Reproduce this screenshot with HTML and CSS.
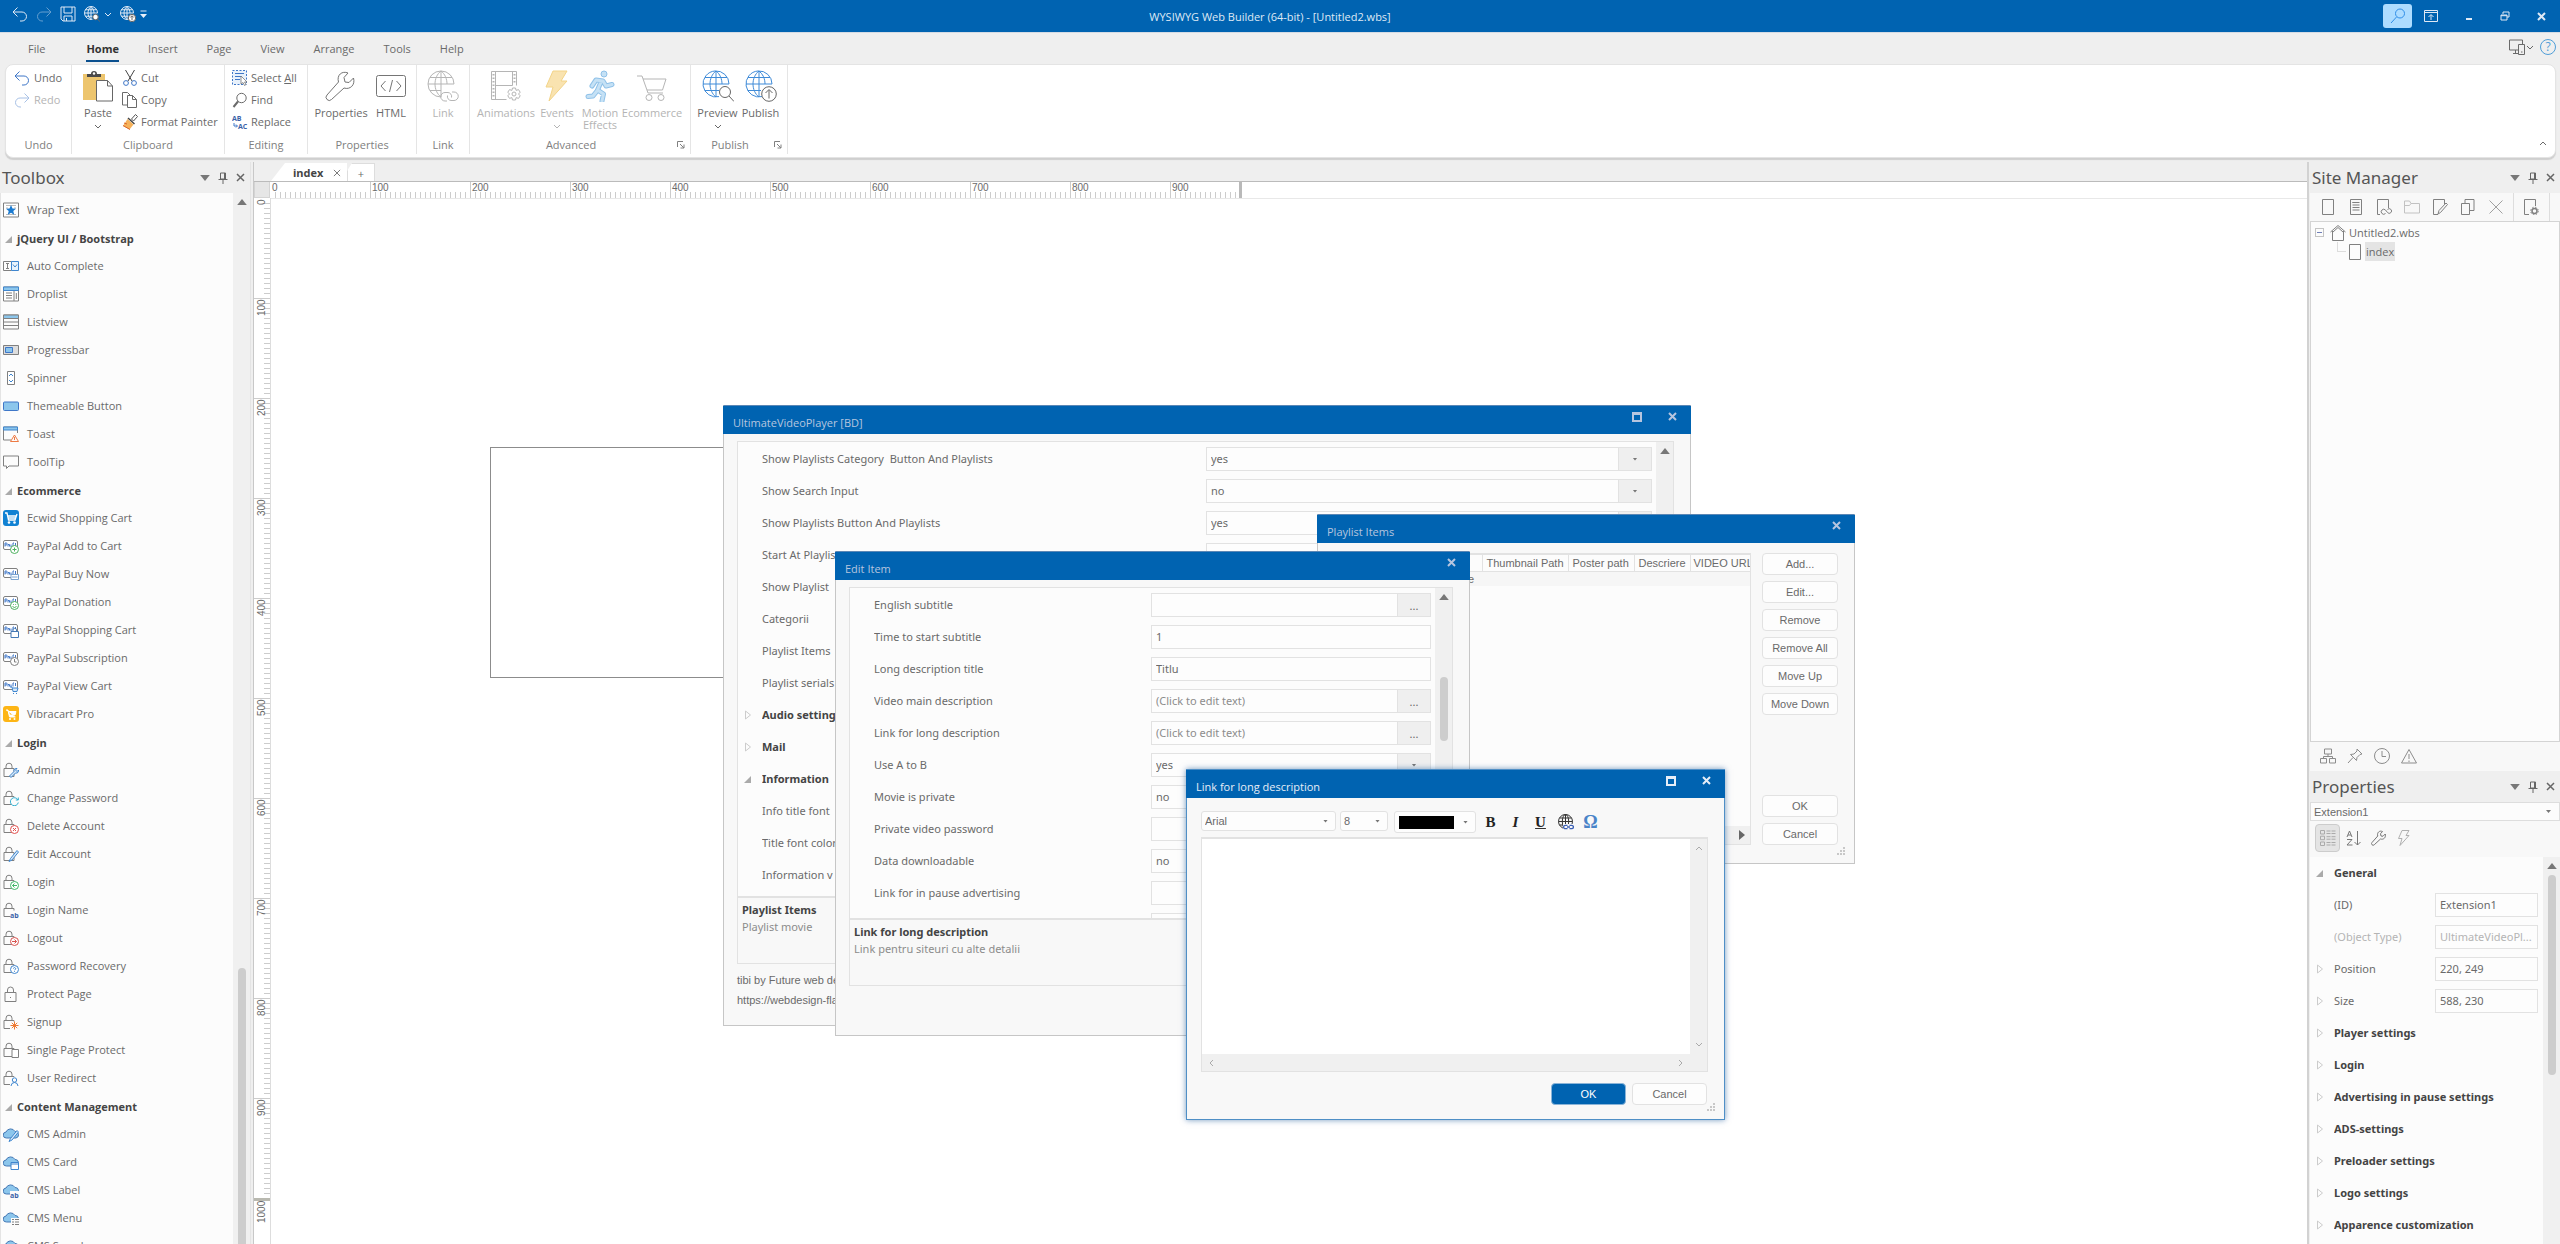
FILE: index.html
```html
<!DOCTYPE html>
<html lang="en">
<head>
<meta charset="utf-8">
<title>WYSIWYG Web Builder (64-bit) - [Untitled2.wbs]</title>
<link rel="stylesheet" href="styles.css">
</head>
<body>
<svg class="sprite" aria-hidden="true">
  <symbol id="undo" viewBox="0 0 16 16"><path d="M5.500 1.500L1 6l4.500 4.500M1 6h9a4.500 4.500 0 0 1 0 9H8" /></symbol>
  <symbol id="redo" viewBox="0 0 16 16"><path d="M10.500 1.500L15 6l-4.500 4.500M15 6H6a4.500 4.500 0 0 0 0 9h1" /></symbol>
  <symbol id="save" viewBox="0 0 16 16"><path d="M1 1h14v14H3l-2-2zM4 1v6h8V1M4 15v-5h8v5M6.500 12v3" /></symbol>
  <symbol id="globe-search" viewBox="0 0 32 32"><path d="M17 26.600A13 13 0 1 1 27 14M14 1v26M1 14h26M3 7.500h22M3 20.500h14M14 1c-8 6-8 20 0 26M14 1c4 3 6 8 6 13"/><g class="badge"><circle cx="23" cy="22" r="5.500"/><path d="M27 26l5 5.500"/></g></symbol>
  <symbol id="globe-up" viewBox="0 0 32 32"><path d="M17 26.600A13 13 0 1 1 27 14M14 1v26M1 14h26M3 7.500h22M3 20.500h13M14 1c-8 6-8 20 0 26M14 1c4 3 6 8 6 13"/><g class="badge"><circle cx="24" cy="24" r="7.300"/><path d="M24 28.500v-8.500M20.500 23l3.500-3.500 3.500 3.500"/></g></symbol>
  <symbol id="globe-link" viewBox="0 0 32 32"><path d="M14 27A13 13 0 1 1 27 14M14 1v26M1 14h26M3 7.500h22M3 20.500h11M14 1c-8 6-8 20 0 26M14 1c4 3 6 8 6 13"/><path d="M20 31h-2a4 4 0 0 1 0-8.500h3a4 4 0 0 1 3.500 5M25 22h2a4 4 0 0 1 0 8.500h-3a4 4 0 0 1-3.500-5"/></symbol>
  <symbol id="chev" viewBox="0 0 8 5"><path d="M1 1l3 3 3-3"/></symbol>
  <symbol id="tri-down" viewBox="0 0 8 5"><path d="M0 0h8L4 5z"/></symbol>
  <symbol id="tri-up" viewBox="0 0 8 5"><path d="M0 5h8L4 0z"/></symbol>
  <symbol id="tri-closed" viewBox="0 0 8 10"><path d="M1.500 1v8l5-4z"/></symbol>
  <symbol id="tri-open" viewBox="0 0 8 8"><path d="M8 0v8H0z"/></symbol>
  <symbol id="pin" viewBox="0 0 10 12"><path d="M2.500 1h5v6h-5zM6.500 1v6M.500 7.500h9M5 7.500V12"/></symbol>
  <symbol id="close" viewBox="0 0 9 9"><path d="M1 1l7 7M8 1L1 8"/></symbol>
  <symbol id="maximize" viewBox="0 0 10 10"><path d="M1 1h8v8H1zM1 2h8"/></symbol>
  <symbol id="launch" viewBox="0 0 8 8"><path d="M.500 6V.500H6M3 3l4 4M7 3.500V7H3.500"/></symbol>
  <symbol id="clipboard" viewBox="0 0 32 32"><path d="M1 4h22v9h-8v17H1z" fill="#edc56e"/><path d="M5 7h14V4h-4a3 3 0 0 0-6 0H5z" fill="#4a4a4a"/><circle cx="12" cy="3.500" r="1.200" fill="#fff"/><path d="M14.500 10.500h11l5 5.500v15h-16zM25.500 10.500V16h5" fill="#fff" stroke="#666"/></symbol>
  <symbol id="cut" viewBox="0 0 16 16"><path d="M3.500 0l6.500 11M12.500 0L6 11" stroke="#444"/><circle cx="4" cy="13" r="2.400" stroke="#3f77c8"/><circle cx="12" cy="13" r="2.400" stroke="#3f77c8"/></symbol>
  <symbol id="copy" viewBox="0 0 16 16"><path d="M5.500 3.500h5l4 4v8h-9zM10.500 3.500v4h4M5 13H.500V.500h5L8 3"/></symbol>
  <symbol id="painter" viewBox="0 0 16 16"><path d="M13.500.500l2 2-4 4.500-2-2z" fill="#fff" stroke="#555"/><path d="M6 4l6.500 6" stroke="#444" stroke-width="1.500"/><path d="M5.500 5l6 5.500-4 5L1 12z" fill="#f6b25a"/><path d="M1 11.500l7 4M2 9l3 1" stroke="#d9662a"/></symbol>
  <symbol id="select-all" viewBox="0 0 16 16"><path d="M.500.500h14v14H.500z" stroke="#3f77c8" stroke-dasharray="2 1.500" fill="#e8f1fb"/><path d="M3 3.500h9M3 6.500h6M3 9.500h5" stroke="#3f77c8"/><path d="M9 6v8l2-1.500 1.500 3 1.500-1-1.500-2.500H15z" fill="#fff" stroke="#777" stroke-width=".8"/></symbol>
  <symbol id="find" viewBox="0 0 16 16"><circle cx="9.500" cy="6" r="4.700"/><path d="M6 9.500L1.500 15" stroke-width="2"/></symbol>
  <symbol id="wrench" viewBox="0 0 32 32"><path d="M28.500 8l-4.500 4.500-4-.5-1-4.500L23 3C17 .5 11.500 5 13.500 12L2 25a3 3 0 0 0 4.500 4.500L19 18c6 2 11.500-3 9.500-10z"/></symbol>
  <symbol id="html" viewBox="0 0 32 32"><rect x="1.500" y="5.500" width="29" height="21" rx="2"/><path d="M10.500 11L6 16l4.500 5M21.500 11l4.500 5-4.500 5M17.500 10l-3 12"/></symbol>
  <symbol id="film" viewBox="0 0 32 32"><path d="M16.500 29.500h-15v-28h25v14M5.500 1.500v28M22.500 1.500v14M5.500 15.500h17"/><path d="M3.500 4v24M24.500 4v10" stroke-dasharray="1.500 2" stroke-width="2"/><path d="M22.500 18h3l.6 2.400 2.400-.8 1.700 2.600-1.700 1.800 1.700 1.800-1.700 2.600-2.400-.8-.6 2.400h-3l-.6-2.400-2.400.8-1.700-2.600 1.700-1.800-1.700-1.800 1.700-2.600 2.400.8z"/><circle cx="24" cy="24" r="2"/></symbol>
  <symbol id="bolt" viewBox="0 0 32 32"><path d="M12 1h14l-6 10h6L8 31l4-14H5z"/></symbol>
  <symbol id="run" viewBox="0 0 32 32"><circle cx="20" cy="4" r="3" fill="#c5e1f5" stroke="#8fc1e8"/><path d="M8 16l4-6 7 1 3 5 6-1.500M17 12l-3.500 8 6 4-1.500 7M13 21l-4 5-5 .5" stroke="#8fc1e8" stroke-width="5" stroke-linejoin="round" stroke-linecap="round"/><path d="M8 16l4-6 7 1 3 5 6-1.500M17 12l-3.500 8 6 4-1.500 7M13 21l-4 5-5 .5" stroke="#c5e1f5" stroke-width="3" stroke-linejoin="round" stroke-linecap="round"/></symbol>
  <symbol id="cart" viewBox="0 0 32 32"><path d="M1 6h5l6 17h15M7 9h23l-3.500 11H11"/><circle cx="13" cy="27.500" r="3"/><circle cx="25" cy="27.500" r="3"/></symbol>
  <symbol id="page" viewBox="0 0 16 16"><path d="M2.500.500h11v15h-11z"/></symbol>
  <symbol id="lock" viewBox="0 0 16 16"><path d="M1 6.500h10v8H1zM3 6.500V4.200a3 3 0 0 1 6 0v2.300"/></symbol>
  <symbol id="paypal" viewBox="0 0 16 16"><rect x=".5" y="2.500" width="14" height="9" rx="1.500" fill="#fff"/><path d="M2 8.500V5h1.200a1 1 0 0 1 0 2H2M5 8.500V6.500h1.500v2M8 6.500v2.500M10 8.500V5h1M12.500 5v3" stroke="#3f77c8" stroke-width="1"/></symbol>
  <symbol id="cloud" viewBox="0 0 16 16"><path d="M3.500 12a3 3 0 0 1-.5-6 5 5 0 0 1 9-.500A3.300 3.300 0 0 1 13 12z" fill="#8cc6ec" stroke="#4579b5"/></symbol>
  <symbol id="pencil" viewBox="0 0 16 16"><path d="M7.500 12.500l-1.500 3 3-1.500 6.500-8-1.500-1.500z" fill="#d7e9f9" stroke="#3f86cf"/></symbol>
</svg>

<header class="titlebar">
  <div class="quick">
    <button aria-label="Undo"><svg class="i16"><use href="#undo"/></svg></button>
    <button aria-label="Redo" class="dim"><svg class="i16"><use href="#redo"/></svg></button>
    <button aria-label="Save"><svg class="i16"><use href="#save"/></svg></button>
    <button aria-label="Preview"><svg class="i16 thick"><use href="#globe-search"/></svg></button>
    <button aria-label="Preview options" class="tiny"><svg class="chev"><use href="#chev"/></svg></button>
    <button aria-label="Publish"><svg class="i16 thick"><use href="#globe-up"/></svg></button>
    <button aria-label="Customize" class="tiny"><svg width="7" height="8" viewBox="0 0 7 8"><path d="M.5 1h6"/><path d="M0 4h7L3.500 8z" fill="#e8f0fa" stroke="none"/></svg></button>
  </div>
  <h1 class="app-title">WYSIWYG Web Builder (64-bit) - [Untitled2.wbs]</h1>
  <div class="system">
    <button class="search" aria-label="Search"><svg class="i16" viewBox="0 0 16 16"><circle cx="10" cy="5.500" r="4.500"/><path d="M6.500 9L1 15"/></svg></button>
    <button aria-label="Ribbon options"><svg width="14" height="12" viewBox="0 0 14 12"><path d="M.5.500h13v11H.500zM.500 2.500h13M7 10V5M4.500 7L7 4.500 9.500 7"/></svg></button>
    <button aria-label="Minimize"><svg width="8" height="12" viewBox="0 0 8 12"><path d="M1 9h6" stroke-width="2"/></svg></button>
    <button aria-label="Restore"><svg width="10" height="10" viewBox="0 0 10 10"><path d="M3 3V1h6v5H7M1 4h6v5H1zM1 4.700h6"/></svg></button>
    <button aria-label="Close"><svg width="9" height="9" class="bold"><use href="#close"/></svg></button>
  </div>
</header>

<nav class="tabs">
  <a href="#" class="tab file">File</a><a href="#" class="tab active">Home</a><a href="#" class="tab">Insert</a><a href="#" class="tab">Page</a><a href="#" class="tab">View</a><a href="#" class="tab">Arrange</a><a href="#" class="tab">Tools</a><a href="#" class="tab">Help</a>
  <div class="tabs-right">
    <button aria-label="Devices"><svg class="i16" viewBox="0 0 16 16"><path d="M9 11H.500V1h13v4M4 14.500h5M6.500 11v3.500M9.500 5.500h6v10h-6zM12 13h1.500"/></svg><svg class="chev"><use href="#chev"/></svg></button>
    <button class="help" aria-label="Help"><span>?</span></button>
  </div>
</nav>

<section class="ribbon">
  <div class="group g-undo">
    <div class="group-body col">
      <button class="small"><svg class="i16 blue"><use href="#undo"/></svg>Undo</button>
      <button class="small disabled"><svg class="i16 blue"><use href="#redo"/></svg>Redo</button>
    </div>
    <div class="group-label">Undo</div>
  </div>
  <div class="group g-clip">
    <div class="group-body">
      <button class="large"><svg class="i32 raw"><use href="#clipboard"/></svg>Paste<svg class="chev"><use href="#chev"/></svg></button>
      <div class="col">
        <button class="small"><svg class="i16 raw"><use href="#cut"/></svg>Cut</button>
        <button class="small"><svg class="i16"><use href="#copy"/></svg>Copy</button>
        <button class="small"><svg class="i16 raw"><use href="#painter"/></svg>Format Painter</button>
      </div>
    </div>
    <div class="group-label">Clipboard</div>
  </div>
  <div class="group g-edit">
    <div class="group-body col">
      <button class="small"><svg class="i16 raw"><use href="#select-all"/></svg><span>Select <u>A</u>ll</span></button>
      <button class="small"><svg class="i16"><use href="#find"/></svg>Find</button>
      <button class="small"><svg class="i16 raw" viewBox="0 0 16 16"><text x="0" y="7" class="ic-text">AB</text><text x="6" y="15" class="ic-text">AC</text><path d="M2 9v3h3M4 10.500L5.500 12 4 13.500" stroke="#3f77c8"/></svg>Replace</button>
    </div>
    <div class="group-label">Editing</div>
  </div>
  <div class="group g-prop">
    <div class="group-body">
      <button class="large w50"><svg class="i32"><use href="#wrench"/></svg>Properties</button>
      <button class="large w50"><svg class="i32"><use href="#html"/></svg>HTML</button>
    </div>
    <div class="group-label">Properties</div>
  </div>
  <div class="group g-link">
    <div class="group-body"><button class="large disabled"><svg class="i32"><use href="#globe-link"/></svg>Link</button></div>
    <div class="group-label">Link</div>
  </div>
  <div class="group g-adv">
    <div class="group-body">
      <button class="large disabled w60"><svg class="i32"><use href="#film"/></svg>Animations</button>
      <button class="large disabled w40"><svg class="i32 bolt"><use href="#bolt"/></svg>Events<svg class="chev"><use href="#chev"/></svg></button>
      <button class="large disabled w46"><svg class="i32 raw"><use href="#run"/></svg><span>Motion<br>Effects</span></button>
      <button class="large disabled w60"><svg class="i32"><use href="#cart"/></svg>Ecommerce</button>
    </div>
    <div class="group-label">Advanced<button class="launch" aria-label="Advanced options"><svg width="8" height="8"><use href="#launch"/></svg></button></div>
  </div>
  <div class="group g-pub">
    <div class="group-body">
      <button class="large w43"><svg class="i32 globe"><use href="#globe-search"/></svg>Preview<svg class="chev"><use href="#chev"/></svg></button>
      <button class="large w43"><svg class="i32 globe"><use href="#globe-up"/></svg>Publish</button>
    </div>
    <div class="group-label">Publish<button class="launch" aria-label="Publish options"><svg width="8" height="8"><use href="#launch"/></svg></button></div>
  </div>
  <button class="collapse" aria-label="Collapse ribbon"><svg width="8" height="5" viewBox="0 0 8 5"><path d="M1 4l3-3 3 3"/></svg></button>
</section>

<main class="workspace">
  <aside class="toolbox">
    <header class="pane-head"><h2>Toolbox</h2><button aria-label="Menu"><svg class="tri"><use href="#tri-down"/></svg></button><button aria-label="Pin"><svg width="10" height="12"><use href="#pin"/></svg></button><button aria-label="Close"><svg width="9" height="9"><use href="#close"/></svg></button></header>
    <div class="pane-scroll">
      <div class="tool-list">
        <button class="tool"><svg viewBox="0 0 16 16"><path d="M.5 1h15v14H.500z" fill="#fff"/><path d="M3 3.500h10M3 6h2M11 6h2M3 12.500h10" stroke="#bbb"/><path d="M8 3l1.500 3.500 3.500.3-2.700 2.300.9 3.600L8 10.800l-3.200 1.900.9-3.600L3 6.800l3.500-.3z" fill="#1a7ad0" stroke="none"/></svg>Wrap Text</button>
        <h3><svg class="open"><use href="#tri-open"/></svg>jQuery UI / Bootstrap</h3>
        <button class="tool"><svg viewBox="0 0 16 16"><path d="M.5 3.500h8v9h-8zM3 5.500h3M3 10.500h3M4.500 5.500v5"/><path d="M8.500 3.500h7v9h-7zM10 6.500L12 9l2-2.500" stroke="#3f86cf" fill="#e8f3fc"/></svg>Auto Complete</button>
        <button class="tool"><svg viewBox="0 0 16 16"><path d="M.5 1h15v14H.500z" fill="#fff"/><path d="M.5 1h15v3.500H.500z" fill="#8cc6ec" stroke="#3f86cf"/><path d="M3 7h6M3 9.500h6M3 12h6M11 5v10M13.300 7v6"/></svg>Droplist</button>
        <button class="tool"><svg viewBox="0 0 16 16"><path d="M.5 1h15v14H.500zM.500 8h15M.500 11.500h15"/><path d="M.5 1h15v3.500H.500z" fill="#8cc6ec"/></svg>Listview</button>
        <button class="tool"><svg viewBox="0 0 16 16"><path d="M.5 3.500h15v9H.500z" fill="#ddd"/><path d="M2.500 5.500h7v5h-7z" fill="#8cc6ec" stroke="#3f77c8"/></svg>Progressbar</button>
        <button class="tool"><svg viewBox="0 0 16 16"><path d="M4.500 1.500h7v13h-7z" fill="#fff"/><path d="M6 6l2-2 2 2M6 10l2 2 2-2" stroke="#3f86cf"/></svg>Spinner</button>
        <button class="tool"><svg viewBox="0 0 16 16"><rect x=".5" y="4" width="15" height="8.500" rx="1" fill="#8cc6ec" stroke="#3f77c8"/></svg>Themeable Button</button>
        <button class="tool"><svg viewBox="0 0 16 16"><path d="M8 14H.500V1h14v6"/><path d="M.5 1h14v3H.500z" fill="#8cc6ec" stroke="#3f86cf"/><path d="M11.500 9l4 6.500h-8zM11.500 11v3" stroke="#ee7a43"/></svg>Toast</button>
        <button class="tool"><svg viewBox="0 0 16 16"><path d="M.5 2h15v10H6l-2.500 2.500V12h-3z"/></svg>ToolTip</button>
        <h3><svg class="open"><use href="#tri-open"/></svg>Ecommerce</h3>
        <button class="tool"><svg viewBox="0 0 16 16"><rect width="16" height="16" rx="3" fill="#1182d3" stroke="none"/><path d="M2 3h2l1.500 7h6.500l2-6M5 6h8M5.500 8h7" stroke="#fff" stroke-width="1.300"/><circle cx="6" cy="12.500" r="1.300" fill="#fff" stroke="none"/><circle cx="11.500" cy="12.500" r="1.300" fill="#fff" stroke="none"/></svg>Ecwid Shopping Cart</button>
        <button class="tool"><svg viewBox="0 0 16 16"><use href="#paypal"/><circle cx="11.500" cy="11.500" r="4" fill="#fff" stroke="#4db05f"/><path d="M11.500 9.500v4M9.500 11.500h4" stroke="#4db05f"/></svg>PayPal Add to Cart</button>
        <button class="tool"><svg viewBox="0 0 16 16"><use href="#paypal"/><path d="M8 8.500h7.500v5H8zM9 11h5.500" stroke="#7aa3d0" fill="#fff"/></svg>PayPal Buy Now</button>
        <button class="tool"><svg viewBox="0 0 16 16"><use href="#paypal"/><circle cx="11.500" cy="11.500" r="4" fill="#fff" stroke="#4db05f"/><path d="M9.500 12.500q2 2 4 0M10 10.500h.8M12.300 10.500h.8" stroke="#4db05f"/></svg>PayPal Donation</button>
        <button class="tool"><svg viewBox="0 0 16 16"><use href="#paypal"/><path d="M8 9.500h7.500v6H8zM10 9.500V8a1.700 1.700 0 0 1 3.500 0v1.500" stroke="#4579b5" fill="#fff"/></svg>PayPal Shopping Cart</button>
        <button class="tool"><svg viewBox="0 0 16 16"><use href="#paypal"/><circle cx="11.500" cy="11.500" r="4" fill="#fff"/><path d="M11.500 9v3h2"/></svg>PayPal Subscription</button>
        <button class="tool"><svg viewBox="0 0 16 16"><use href="#paypal"/><path d="M7 9h2l1 4.500h4l1-3.500H9.500" stroke="#3f86cf" fill="#d7e9f9"/><path d="M10 15.500h1M13 15.500h1" stroke="#3f86cf"/></svg>PayPal View Cart</button>
        <button class="tool"><svg viewBox="0 0 16 16"><rect width="16" height="16" rx="3" fill="#fdb515" stroke="none"/><path d="M3 4h2l1.500 7h6M5.500 5.500H13l-1 3.500H6.500z" stroke="#fff" fill="#fff"/><circle cx="7" cy="13" r="1" fill="#fff" stroke="none"/><circle cx="11.500" cy="13" r="1" fill="#fff" stroke="none"/></svg>Vibracart Pro</button>
        <h3><svg class="open"><use href="#tri-open"/></svg>Login</h3>
        <button class="tool"><svg viewBox="0 0 16 16"><use href="#lock"/><path d="M15.500 8l-1.500 1.500-1.500-1.500L14 6.500c-2-.5-3.500 1-3 3L6.500 14l1.500 1.500 4.500-4.500c2 .5 3.500-1 3-3z" stroke="#3f86cf" fill="#d7e9f9"/></svg>Admin</button>
        <button class="tool"><svg viewBox="0 0 16 16"><use href="#lock"/><circle cx="11.500" cy="11.500" r="4.500" fill="#fcfcfc" stroke="none"/><path d="M15 10a4 4 0 1 0 .3 2.500M15.300 7.500V10h-2.500" stroke="#35b0d0"/></svg>Change Password</button>
        <button class="tool"><svg viewBox="0 0 16 16"><use href="#lock"/><circle cx="11.500" cy="11.500" r="4" fill="#fff" stroke="#e2504e"/><path d="M10 10l3 3M13 10l-3 3" stroke="#e2504e"/></svg>Delete Account</button>
        <button class="tool"><svg viewBox="0 0 16 16"><use href="#lock"/><use href="#pencil"/></svg>Edit Account</button>
        <button class="tool"><svg viewBox="0 0 16 16"><use href="#lock"/><circle cx="11.500" cy="11.500" r="4" fill="#fff" stroke="#43b86a"/><path d="M14 11.500H9.500M11.500 9.500l-2 2 2 2" stroke="#43b86a"/></svg>Login</button>
        <button class="tool"><svg viewBox="0 0 16 16"><use href="#lock"/><path d="M7 8.500h9V16H7z" fill="#fcfcfc" stroke="none"/><text x="7" y="15.500" class="ic-text">ab</text></svg>Login Name</button>
        <button class="tool"><svg viewBox="0 0 16 16"><use href="#lock"/><circle cx="11.500" cy="11.500" r="4" fill="#fff" stroke="#d9534f"/><path d="M9 11.500h4.500M11.500 9.500l2 2-2 2" stroke="#d9534f"/></svg>Logout</button>
        <button class="tool"><svg viewBox="0 0 16 16"><use href="#lock"/><circle cx="11.500" cy="11.500" r="4" fill="#fff" stroke="#3f86cf"/><path d="M10.200 10.500q1.300-2 2.600 0q0 1-1.300 1.500M11.500 13v.8" stroke="#3f86cf"/></svg>Password Recovery</button>
        <button class="tool"><svg viewBox="0 0 16 16"><path d="M2 6.500h11v9H2zM4.500 6.500V4a3 3 0 0 1 6 0v2.500M7.500 11v1"/></svg>Protect Page</button>
        <button class="tool"><svg viewBox="0 0 16 16"><use href="#lock"/><path d="M7 7.500h9V16H7z" fill="#fcfcfc" stroke="none"/><path d="M11.500 7.500v8M7.500 11.500h8M8.800 8.800l5.400 5.400M14.200 8.800l-5.400 5.400" stroke="#ee7a33"/></svg>Signup</button>
        <button class="tool"><svg viewBox="0 0 16 16"><use href="#lock"/><path d="M9 7.500h6.500v8H9z" fill="#fff"/></svg>Single Page Protect</button>
        <button class="tool"><svg viewBox="0 0 16 16"><use href="#lock"/><path d="M7 7h9v9H7z" fill="#fcfcfc" stroke="none"/><path d="M8 16q.3-3.500 3.500-3.500T15 16" stroke="#3f86cf"/><circle cx="11.500" cy="10" r="2.200" stroke="#3f86cf"/></svg>User Redirect</button>
        <h3><svg class="open"><use href="#tri-open"/></svg>Content Management</h3>
        <button class="tool"><svg viewBox="0 0 16 16"><use href="#cloud"/><use href="#pencil"/></svg>CMS Admin</button>
        <button class="tool"><svg viewBox="0 0 16 16"><use href="#cloud"/><path d="M8 8.500h7.500v7H8zM8 10h7.500" fill="#fff" stroke="#3f86cf"/></svg>CMS Card</button>
        <button class="tool"><svg viewBox="0 0 16 16"><use href="#cloud"/><path d="M7 9h9v7H7z" fill="#fcfcfc" stroke="none"/><text x="7" y="15.500" class="ic-text">ab</text></svg>CMS Label</button>
        <button class="tool"><svg viewBox="0 0 16 16"><use href="#cloud"/><path d="M8 8h8v8H8z" fill="#fcfcfc" stroke="none"/><path d="M9 9.500h2M12 9.500h4M9 12h2M12 12h4M9 14.500h2M12 14.500h4"/></svg>CMS Menu</button>
        <button class="tool"><svg viewBox="0 0 16 16"><use href="#cloud"/></svg>CMS Search</button>
      </div>
      <div class="sbar"><svg class="tri"><use href="#tri-up"/></svg><span class="thumb thumb-tool"></span></div>
    </div>
  </aside>

  <section class="document">
    <div class="doc-tabs">
      <button class="doc-tab"><b>index</b><svg width="8" height="8"><use href="#close"/></svg></button><button class="doc-add" aria-label="New page">+</button>
    </div>
    <div class="ruler-x"><span class="corner"></span><div class="scale-x"><i>0</i><i>100</i><i>200</i><i>300</i><i>400</i><i>500</i><i>600</i><i>700</i><i>800</i><i>900</i></div></div>
    <div class="doc-body">
      <div class="ruler-y"><div class="scale-y"><i>0</i><i>100</i><i>200</i><i>300</i><i>400</i><i>500</i><i>600</i><i>700</i><i>800</i><i>900</i></div><div class="scale-end"><i>1000</i></div></div>
      <div class="canvas"><div class="extension"></div></div>
    </div>
  </section>

  <aside class="right">
    <header class="pane-head"><h2>Site Manager</h2><button aria-label="Menu"><svg class="tri"><use href="#tri-down"/></svg></button><button aria-label="Pin"><svg width="10" height="12"><use href="#pin"/></svg></button><button aria-label="Close"><svg width="9" height="9"><use href="#close"/></svg></button></header>
    <div class="site-tools">
      <button aria-label="New page"><svg class="i16"><use href="#page"/></svg></button>
      <button aria-label="Page from template"><svg class="i16" viewBox="0 0 16 16"><path d="M2.500.500h11v15h-11zM4.500 3.500h3M4.500 6h7M4.500 8.500h7M4.500 11h7M4.500 3.500h7"/></svg></button>
      <button aria-label="New link"><svg class="i16" viewBox="0 0 16 16"><path d="M4 15.500H1.500V.500h11V9"/><path d="M9.500 14.500a2.500 2.500 0 1 1 0-3.500l2 2.500a2.300 2.300 0 1 0 0-3"/></svg></button>
      <button aria-label="New folder" class="faint"><svg class="i16" viewBox="0 0 16 16"><path d="M.5 14V2h5l1.500 2.500h8.500V14zM.500 6.500h5L7 4.500"/></svg></button>
      <button aria-label="Edit"><svg class="i16" viewBox="0 0 16 16"><path d="M6 15.500H1.500V.500h11V5M6 15l1-3.500 7-7.500 1.500 1.500-7 8z"/></svg></button>
      <button aria-label="Clone"><svg class="i16" viewBox="0 0 16 16"><path d="M1.500 4.500h8v11h-8zM5 4.500v-4h9v11H9.500"/></svg></button>
      <button aria-label="Delete" class="soft"><svg class="i16" viewBox="0 0 16 16"><path d="M1.500 1.500l13 13M14.500 1.500l-13 13"/></svg></button>
      <span class="vsep"></span>
      <button aria-label="Page properties"><svg class="i16" viewBox="0 0 16 16"><path d="M6 15.500H1.500V.500h11V7"/><circle cx="11.500" cy="12" r="2.500" stroke-width="1.500"/><circle cx="11.500" cy="12" r="3.800" stroke-dasharray="1.500 1.500"/></svg></button>
      <span class="vsep"></span>
    </div>
    <div class="tree">
      <div class="node"><span class="minus"></span><svg class="i16" viewBox="0 0 16 16"><path d="M.5 7L8 .500 15.500 7M2.500 6v9.500h11V6"/><path d="M3 7l5-4.500L13 7"/></svg>Untitled2.wbs</div>
      <div class="node child"><span class="branch"></span><svg class="i16"><use href="#page"/></svg><span class="picked">index</span></div>
    </div>
    <div class="site-foot">
      <button aria-label="Site map"><svg class="i16" viewBox="0 0 16 16"><path d="M4.500 1h7v5h-7zM.500 10.500h6v4.500h-6zM9.500 10.500h6v4.500h-6zM8 6v2.500M3.500 10.500v-2h9v2"/></svg></button>
      <button aria-label="Pinned"><svg class="i16" viewBox="0 0 16 16"><path d="M10 1l5 5-2 .5-3 3-.5 3L3.500 6.500 7 6l3-3zM6 9.500L1 15"/></svg></button>
      <button aria-label="Recent"><svg class="i16" viewBox="0 0 16 16"><circle cx="8" cy="8" r="7.500"/><path d="M8 3v5.500h4"/></svg></button>
      <button aria-label="Warnings"><svg class="i16" viewBox="0 0 16 16"><path d="M8 1.500L15.500 15H.500zM8 6v5M8 12.500V14"/></svg></button>
    </div>
    <header class="pane-head"><h2>Properties</h2><button aria-label="Menu"><svg class="tri"><use href="#tri-down"/></svg></button><button aria-label="Pin"><svg width="10" height="12"><use href="#pin"/></svg></button><button aria-label="Close"><svg width="9" height="9"><use href="#close"/></svg></button></header>
    <div class="object-pick"><select aria-label="Object"><option>Extension1</option></select><span class="drop"></span></div>
    <div class="prop-tools">
      <button class="on" aria-label="Categorized"><svg class="i16" viewBox="0 0 16 16"><path d="M.5.500h4v3.500h-4zM.500 6.200h4v3.500h-4zM.500 12h4v3.500h-4zM6.500 1h4M6.500 3.500h4M6.500 6.700h4M6.500 9.200h4M6.500 12.500h4M6.500 15h4M11.500 1h4M11.500 3.500h4M11.500 6.700h4M11.500 9.200h4M11.500 12.500h4M11.500 15h4"/></svg></button>
      <button aria-label="Alphabetical"><svg class="i16" viewBox="0 0 16 16"><path d="M1 7l2.500-6L6 7M2 5h3M1 9.500h5L1 15h5.500M11.500 1v14M8.500 12l3 3 3-3"/></svg></button>
      <button aria-label="Settings"><svg class="i16 thick"><use href="#wrench"/></svg></button>
      <button aria-label="Events" class="faint"><svg class="i16 thick"><use href="#bolt"/></svg></button>
    </div>
    <div class="pane-scroll props">
      <div class="prop-list">
        <div class="row"><svg class="open"><use href="#tri-open"/></svg><b>General</b></div>
        <div class="row"><label for="p-id">(ID)</label><div class="field"><input id="p-id" value="Extension1"></div></div>
        <div class="row muted"><label for="p-type">(Object Type)</label><div class="field"><input id="p-type" value="UltimateVideoPl..." disabled></div></div>
        <div class="row"><svg class="closed"><use href="#tri-closed"/></svg><label for="p-pos">Position</label><div class="field"><input id="p-pos" value="220, 249"></div></div>
        <div class="row"><svg class="closed"><use href="#tri-closed"/></svg><label for="p-size">Size</label><div class="field"><input id="p-size" value="588, 230"></div></div>
        <div class="row"><svg class="closed"><use href="#tri-closed"/></svg><b>Player settings</b></div>
        <div class="row"><svg class="closed"><use href="#tri-closed"/></svg><b>Login</b></div>
        <div class="row"><svg class="closed"><use href="#tri-closed"/></svg><b>Advertising in pause settings</b></div>
        <div class="row"><svg class="closed"><use href="#tri-closed"/></svg><b>ADS-settings</b></div>
        <div class="row"><svg class="closed"><use href="#tri-closed"/></svg><b>Preloader settings</b></div>
        <div class="row"><svg class="closed"><use href="#tri-closed"/></svg><b>Logo settings</b></div>
        <div class="row"><svg class="closed"><use href="#tri-closed"/></svg><b>Apparence customization</b></div>
      </div>
      <div class="sbar"><svg class="tri"><use href="#tri-up"/></svg><span class="thumb thumb-props"></span></div>
    </div>
  </aside>
</main>

<section class="dialog d-player" aria-label="UltimateVideoPlayer">
  <header class="d-title"><span>UltimateVideoPlayer [BD]</span><button aria-label="Maximize"><svg width="10" height="10"><use href="#maximize"/></svg></button><button aria-label="Close"><svg width="9" height="9"><use href="#close"/></svg></button></header>
  <div class="sheet">
    <div class="sheet-rows">
      <div class="prop-list">
        <div class="row"><label for="u1">Show Playlists Category&nbsp; Button And Playlists</label><div class="field"><select id="u1"><option>yes</option></select><span class="drop box"></span></div></div>
        <div class="row"><label for="u2">Show Search Input</label><div class="field"><select id="u2"><option>no</option></select><span class="drop box"></span></div></div>
        <div class="row"><label for="u3">Show Playlists Button And Playlists</label><div class="field"><select id="u3"><option>yes</option></select><span class="drop box"></span></div></div>
        <div class="row"><label for="u4">Start At Playlist</label><div class="field"><input id="u4"></div></div>
        <div class="row"><label for="u5">Show Playlist</label><div class="field"><input id="u5"></div></div>
        <div class="row"><label for="u6">Categorii</label><div class="field"><input id="u6"></div></div>
        <div class="row"><label for="u7">Playlist Items</label><div class="field"><input id="u7"></div></div>
        <div class="row"><label for="u8">Playlist serials</label><div class="field"><input id="u8"></div></div>
        <div class="row"><svg class="closed"><use href="#tri-closed"/></svg><b>Audio settings</b></div>
        <div class="row"><svg class="closed"><use href="#tri-closed"/></svg><b>Mail</b></div>
        <div class="row"><svg class="open"><use href="#tri-open"/></svg><b>Information</b></div>
        <div class="row"><label for="u9">Info title font</label><div class="field"><input id="u9"></div></div>
        <div class="row"><label for="u10">Title font color</label><div class="field"><input id="u10"></div></div>
        <div class="row"><label for="u11">Information v</label><div class="field"><input id="u11"></div></div>
      </div>
      <div class="sbar"><svg class="tri"><use href="#tri-up"/></svg></div>
    </div>
    <div class="sheet-note"><b>Playlist Items</b><p>Playlist movie</p></div>
  </div>
  <div class="credits"><p>tibi by Future web de</p><p>https://webdesign-fla</p></div>
</section>

<section class="dialog d-list" aria-label="Playlist Items">
  <header class="d-title"><span>Playlist Items</span><button aria-label="Close"><svg width="9" height="9"><use href="#close"/></svg></button></header>
  <div class="list-body">
    <div class="list-frame">
      <table>
        <thead><tr><th class="c-first"></th><th class="c-thumb">Thumbnail Path</th><th class="c-poster">Poster path</th><th class="c-desc">Descriere</th><th>VIDEO URL</th></tr></thead>
        <tbody><tr><td class="c-first">e</td><td></td><td></td><td></td><td></td></tr></tbody>
      </table>
      <div class="hbar"><svg width="6" height="10" viewBox="0 0 6 10"><path d="M0 0v10l6-5z"/></svg></div>
    </div>
    <div class="list-buttons">
      <button class="btn">Add...</button><button class="btn">Edit...</button><button class="btn">Remove</button><button class="btn">Remove All</button><button class="btn">Move Up</button><button class="btn">Move Down</button>
      <button class="btn push">OK</button><button class="btn">Cancel</button>
    </div>
  </div>
  <svg class="grip" viewBox="0 0 9 9"><path d="M6 0h2v2H6zM3 3h2v2H3zM6 3h2v2H6zM0 6h2v2H0zM3 6h2v2H3zM6 6h2v2H6z"/></svg>
</section>

<section class="dialog d-edit" aria-label="Edit Item">
  <header class="d-title"><span>Edit Item</span><button aria-label="Close"><svg width="9" height="9"><use href="#close"/></svg></button></header>
  <div class="sheet">
    <div class="sheet-rows">
      <div class="prop-list">
        <div class="row"><label for="e1">English subtitle</label><div class="field"><input id="e1"><button class="more">...</button></div></div>
        <div class="row"><label for="e2">Time to start subtitle</label><div class="field"><input id="e2" value="1"></div></div>
        <div class="row"><label for="e3">Long description title</label><div class="field"><input id="e3" value="Titlu"></div></div>
        <div class="row"><label for="e4">Video main description</label><div class="field"><input id="e4" class="hint" value="(Click to edit text)"><button class="more">...</button></div></div>
        <div class="row"><label for="e5">Link for long description</label><div class="field"><input id="e5" class="hint" value="(Click to edit text)"><button class="more">...</button></div></div>
        <div class="row"><label for="e6">Use A to B</label><div class="field"><select id="e6"><option>yes</option></select><span class="drop box"></span></div></div>
        <div class="row"><label for="e7">Movie is private</label><div class="field"><select id="e7"><option>no</option></select><span class="drop box"></span></div></div>
        <div class="row"><label for="e8">Private video password</label><div class="field"><input id="e8"></div></div>
        <div class="row"><label for="e9">Data downloadable</label><div class="field"><select id="e9"><option>no</option></select><span class="drop box"></span></div></div>
        <div class="row"><label for="e10">Link for in pause advertising</label><div class="field"><input id="e10"></div></div>
        <div class="row"><label for="e11"></label><div class="field"><input id="e11"></div></div>
      </div>
      <div class="sbar"><svg class="tri"><use href="#tri-up"/></svg><span class="thumb thumb-edit"></span></div>
    </div>
    <div class="sheet-note"><b>Link for long description</b><p>Link pentru siteuri cu alte detalii</p></div>
  </div>
</section>

<section class="dialog d-text" aria-label="Link for long description">
  <header class="d-title"><span>Link for long description</span><button aria-label="Maximize"><svg width="10" height="10"><use href="#maximize"/></svg></button><button aria-label="Close"><svg width="9" height="9"><use href="#close"/></svg></button></header>
  <div class="format">
    <div class="combo font"><select aria-label="Font"><option>Arial</option></select><span class="drop"></span></div>
    <div class="combo size"><select aria-label="Size"><option>8</option></select><span class="drop"></span></div>
    <button class="combo color" aria-label="Text color"><span class="swatch"></span><span class="drop"></span></button>
    <button class="fmt"><b>B</b></button><button class="fmt"><i><b>I</b></i></button><button class="fmt"><u><b>U</b></u></button>
    <button class="fmt" aria-label="Insert link"><svg class="i16" viewBox="0 0 16 16"><circle cx="7.500" cy="7.500" r="7"/><ellipse cx="7.500" cy="7.500" rx="3.200" ry="7"/><path d="M7.500.500v14M.500 7.500h14M1.500 4h12M1.500 11h12"/><path d="M5 10h11v6H5z" fill="#f8f8f8" stroke="none"/><path d="M9.500 14.700H7.300a1.600 1.600 0 0 1 0-3.400h2.200M11.500 11.300h2.200a1.600 1.600 0 0 1 0 3.400h-2.200M9 13h3" stroke="#3b5fb5" stroke-width="1.300"/></svg></button>
    <button class="fmt omega">Ω</button>
  </div>
  <div class="editor">
    <textarea aria-label="Text"></textarea>
    <div class="vbar"><svg width="8" height="5" viewBox="0 0 8 5"><path d="M1 4l3-3 3 3"/></svg><svg width="8" height="5"><use href="#chev"/></svg></div>
    <div class="hbar2"><svg width="5" height="8" viewBox="0 0 5 8"><path d="M4 1L1 4l3 3"/></svg><svg width="5" height="8" viewBox="0 0 5 8"><path d="M1 1l3 3-3 3"/></svg></div>
  </div>
  <div class="actions"><button class="btn primary">OK</button><button class="btn">Cancel</button></div>
  <svg class="grip" viewBox="0 0 9 9"><path d="M6 0h2v2H6zM3 3h2v2H3zM6 3h2v2H6zM0 6h2v2H0zM3 6h2v2H3zM6 6h2v2H6z"/></svg>
</section>
</body>
</html>
```
FILE: styles.css
```css
:root {
  --blue: #0063b1;
  --chrome: #efefef;
  --sheet: #fcfcfc;
  --line: #e2e2e2;
  --text: #6a6a6a;
  --dark: #444;
  --ui: "Open Sans", "Noto Sans", sans-serif;
  --wide: "Noto Sans", "Open Sans", sans-serif;
  --arial: "Liberation Sans", Arial, sans-serif;
}
* { box-sizing: border-box; }
body {
  margin: 0;
  height: 100vh;
  display: flex;
  flex-direction: column;
  overflow: hidden;
  position: relative;
  background: var(--chrome);
  color: var(--text);
  font: 11px/16px var(--ui);
}
button, input, select, textarea { font: inherit; color: inherit; margin: 0; padding: 0; border: 0; background: none; outline: 0; border-radius: 0; }
select { appearance: none; }
p, h1, h2, h3 { margin: 0; font-weight: 400; }
b { font-weight: 700; color: var(--dark); }
svg { fill: none; stroke: currentColor; flex: none; display: block; }
.sprite { position: absolute; width: 0; height: 0; }
.i16 { width: 16px; height: 16px; }
.i32 { width: 32px; height: 32px; stroke: #757575; }
.raw { stroke: none; }
.thick { stroke-width: 2px; }
.bold { stroke-width: 2px; }
.chev { width: 8px; height: 5px; stroke: #666; }
.tri { width: 10px; height: 6px; fill: #777; stroke: none; }
.open { width: 7px; height: 7px; fill: #aaa; stroke: none; }
.closed { width: 8px; height: 10px; stroke: #ccc; }
.ic-text { font: 700 7px var(--ui); fill: #3b62a8; stroke: none; }

/* Title bar */
.titlebar { height: 32px; flex: none; display: flex; align-items: center; background: var(--blue); color: #dfe9f5; }
.quick, .system { flex: 1; display: flex; align-items: center; }
.quick { gap: 8px; padding: 0 18px 4px 12px; }
.quick .chev { stroke: #dfe9f5; }
.dim { opacity: .45; }
.tiny { width: 8px; margin-left: -4px; }
.app-title { font-size: 11px; padding-top: 2px; margin-right: 36px; }
.system { justify-content: flex-end; padding-right: 14px; gap: 27px; }
.search { width: 29px; height: 24px; display: grid; place-items: center; background: #addcff; color: #2f8ee8; border-radius: 3px; margin-right: -15px; }

/* Ribbon tabs */
.tabs { height: 32px; flex: none; display: flex; align-items: center; gap: 29px; padding: 0 0 1px 28px; border-top: 1px solid #d4dbe4; }
.tab { color: var(--text); text-decoration: none; padding: 7px 0 3px; border-bottom: 2px solid transparent; }
.tab.file { margin-right: 12px; }
.tab.active { font-weight: 700; color: #333; border-color: #0a4f8e; }
.tabs-right { margin-left: auto; display: flex; align-items: center; gap: 6px; padding: 0 4px 2px 0; }
.tabs-right button { display: flex; align-items: center; gap: 1px; }
.help span { width: 16px; height: 16px; border: 1px solid #4f9ed8; border-radius: 50%; color: #4f9ed8; font-size: 12px; line-height: 14px; text-align: center; }

/* Ribbon */
.ribbon { flex: none; height: 94px; margin: 0 4px 0 5px; display: flex; background: #fff; border: 1px solid #e4e4e4; border-radius: 8px; box-shadow: 0 2px 1px #cfcfcf; padding-bottom: 3px; }
.group { display: flex; flex-direction: column; justify-content: space-between; border-right: 1px solid #e5e5e5; }
.group-body { display: flex; padding: 5px 0 0; }
.group-label { position: relative; text-align: center; color: #808080; line-height: 18px; }
.launch { position: absolute; right: 5px; top: 5px; }
.col { display: flex; flex-direction: column; gap: 6px; }
.small { display: flex; align-items: center; gap: 3px; height: 16px; white-space: nowrap; }
.blue { stroke: #3f77c8; }
.g-undo { width: 66px; } .g-undo .col { padding: 5px 0 0 8px; }
.g-undo .small { gap: 4px; }
.g-clip { width: 153px; } .g-clip .group-body { padding-left: 8px; gap: 6px; }
.g-edit { width: 83px; } .g-edit .col { padding: 5px 0 0 7px; }
.g-prop { width: 109px; } .g-prop .group-body { padding-left: 8px; }
.g-link { width: 53px; } .g-link .group-body { justify-content: center; }
.g-adv { width: 221px; } .g-adv .group-body { padding-left: 6px; }
.g-adv .group-label { padding-right: 18px; }
.g-pub { width: 97px; } .g-pub .group-body { padding-left: 5px; }
.g-pub .group-label { padding-right: 18px; }
.large { display: flex; flex-direction: column; align-items: center; line-height: 12px; white-space: nowrap; gap: 5px; width: 36px; }
.large.disabled .i32 { stroke: #b5b5b5; }
.w40 { width: 42px; } .w43 { width: 43px; } .w46 { width: 44px; } .w50 { width: 50px; } .w60 { width: 60px; }
.large.disabled .bolt { fill: #f9e3b0; stroke: #f3d488; }
.large.disabled .raw { stroke: none; }
.raw.i32 { stroke: none; }
.disabled { color: #b4b4b4; }
.disabled .blue { opacity: .45; }
.disabled .chev { stroke: #b4b4b4; }
.globe { stroke: #3f8bd8; }
.badge { stroke: #666; fill: #fff; }
.titlebar .badge { stroke: #dfe9f5; fill: var(--blue); }
.collapse { margin: auto 8px 8px auto; }

/* Workspace */
.workspace { flex: 1; min-height: 0; display: flex; padding-top: 4px; }
.pane-head { height: 31px; flex: none; display: flex; align-items: center; gap: 8px; padding-right: 5px; color: #666; }
.pane-head h2 { flex: 1; font: 17px/24px var(--wide); color: #555; padding-left: 2px; }
.pane-head button { height: 12px; display: grid; place-items: center; }
.pane-head button:last-child svg { stroke-width: 1.5px; }
.pane-scroll { flex: 1; min-height: 0; display: flex; overflow: hidden; background: var(--sheet); }
.sbar { width: 17px; flex: none; display: flex; flex-direction: column; align-items: center; background: #f0f0f0; padding-top: 6px; }
.thumb { width: 8px; border-radius: 4px; background: #cdcdcd; flex: none; }
.thumb-tool { margin-top: 763px; flex: 1; border-radius: 4px 4px 0 0; }
.thumb-props { margin-top: 6px; height: 200px; }
.thumb-edit { margin-top: 77px; height: 64px; }

.toolbox { width: 251px; flex: none; display: flex; flex-direction: column; border-right: 1px solid #e4e4e4; }
.toolbox .pane-scroll { border-left: 1px solid #e4e4e4; }
.tool-list { flex: 1; overflow: hidden; padding-top: 3px; }
.tool, .tool-list h3 { display: flex; align-items: center; width: 100%; height: 28px; }
.tool { gap: 8px; padding-left: 2px; }
.tool svg { width: 16px; height: 16px; stroke: #808080; }
.tool-list h3 { gap: 5px; padding: 2px 0 0 4px; font-size: 11px; font-weight: 700; color: var(--dark); }

/* Document */
.document { flex: 1; min-width: 0; display: flex; flex-direction: column; margin-left: 2px; border-left: 1px solid #c8c8c8; border-right: 2px solid #d2d2d2; }
.doc-tabs { height: 19px; flex: none; display: flex; padding: 1px 0 0 17px; }
.doc-tab { width: 76px; display: flex; align-items: center; gap: 10px; padding: 2px 0 0 22px; background: #fff; clip-path: polygon(14px 0, 100% 0, 100% 100%, 0 100%); }
.doc-add { width: 28px; background: #fff; border: 1px solid #ddd; border-bottom: 0; padding-top: 2px; line-height: 14px; clip-path: polygon(5px 0, 100% 0, 100% 100%, 0 100%, 0 8px); }
.ruler-x { height: 17px; flex: none; display: flex; background: #fff; border-top: 1px solid #bbb; }
.corner { width: 16px; background: #e6e6e6; border: 1px solid #d4d4d4; border-top: 0; }
.scale-x { display: flex; border-right: 3px solid #b9b9b9; width: 972px; overflow: hidden; background: repeating-linear-gradient(90deg, #ccc 0 1px, transparent 1px 5px) 0 bottom / 100% 6px no-repeat; }
.scale-x i { width: 100px; flex: none; border-left: 1px solid #ccc; padding-left: 1px; }
.scale-x i:first-child { border-color: #fff; }
i { font: 10px/12px var(--arial); }
.doc-body { flex: 1; min-height: 0; display: flex; }
.ruler-y { width: 17px; flex: none; display: flex; flex-direction: column; background: #fff; border-right: 1px solid #ddd; overflow: hidden; }
.scale-y { flex: none; border-bottom: 3px solid #b9b9b0; background: repeating-linear-gradient(#ccc 0 1px, transparent 1px 5px) right 0 / 6px 100% no-repeat; }
.ruler-y i { display: block; width: 16px; text-align: right; writing-mode: vertical-rl; transform: rotate(180deg); padding-right: 2px; }
.scale-y i { height: 100px; border-bottom: 1px solid #ccc; }
.scale-y i:first-child { border-color: #fff; }
.scale-end i { height: 40px; }
.canvas { flex: 1; position: relative; background: #fff; border-top: 1px solid #e8e8e8; overflow: hidden; }
.extension { position: absolute; left: 219px; top: 248px; width: 588px; height: 231px; border: 1px solid #8c8c8c; }

/* Right dock */
.right { width: 250px; flex: none; margin-left: 1px; display: flex; flex-direction: column; }
.site-tools { height: 29px; flex: none; display: flex; align-items: center; gap: 12px; padding-left: 10px; background: #f8f8f8; border-bottom: 1px solid #d4d4d4; color: #808080; }
.faint { color: #c2c2c2; }
.soft { color: #a0a0a0; }
.vsep { width: 1px; height: 28px; background: #ddd; margin: 0 -3px; }
.site-tools .vsep:last-child { margin-left: -2px; }
.tree { flex: none; height: 520px; background: var(--sheet); border: 1px solid #d4d4d4; border-top: 0; padding-top: 1px; }
.node { display: flex; align-items: center; gap: 3px; height: 19px; }
.node svg { stroke: #808080; }
.minus { width: 9px; height: 9px; margin: 0 3px 0 4px; border: 1px solid #c4c4c4; background: linear-gradient(#6f7fb8, #6f7fb8) center / 5px 1px no-repeat; }
.branch { width: 9px; height: 10px; border: solid #ddd; border-width: 0 0 1px 1px; margin: -10px 0 0 26px; }
.child { gap: 1px; }
.picked { background: #e4e4e4; padding: 1px; line-height: 17px; margin-left: 1px; }
.site-foot { height: 29px; flex: none; display: flex; align-items: center; gap: 11px; padding: 0 0 1px 10px; background: #f8f8f8; color: #8c8c8c; }
.object-pick { height: 19px; flex: none; display: flex; align-items: center; background: var(--sheet); border: 1px solid #ddd; font: 11px/16px var(--arial); padding: 0 8px 0 3px; }
.object-pick select { flex: 1; }
.drop { width: 5px; height: 3px; flex: none; background: #777; clip-path: polygon(0 0, 100% 0, 50% 100%); }
.prop-tools { height: 36px; flex: none; display: flex; align-items: center; gap: 9px; padding: 0 0 3px 5px; background: #f8f8f8; color: #777; }
.prop-tools .on { width: 25px; height: 28px; display: grid; place-items: center; background: #e4e4e4; border: 1px solid #ccc; border-radius: 4px; color: #aaa; margin-right: -3px; }
.prop-tools .faint { color: #b0b0b0; }

/* Property rows shared by the dock and the dialogs */
.prop-list { flex: 1; min-width: 0; overflow: hidden; padding-right: 4px; font-family: var(--wide); }
.row { height: 32px; display: grid; grid-template-columns: 24px var(--label) minmax(0, 1fr); align-items: center; }
.row svg { margin-left: 6px; }
.row label, .row b { grid-column: 2; white-space: nowrap; overflow: hidden; }
.row b { grid-column: 2 / 4; }
.field { display: flex; height: 24px; border: 1px solid var(--line); background: #fdfdfd; }
.field input, .field select { flex: 1; min-width: 0; padding-left: 4px; }
.field .hint { color: #8c8c8c; }
.muted, .muted input { color: #b4b4b4; }
.more, .drop.box { width: 33px; height: 22px; flex: none; background: var(--chrome); border-left: 1px solid var(--line); }
.drop.box { clip-path: none; display: grid; place-items: center; }
.drop.box::after { content: ""; width: 5px; height: 3px; background: #777; clip-path: polygon(0 0, 100% 0, 50% 100%); }
.more { padding-top: 2px; line-height: 10px; }
.props { --label: 101px; }
.props .prop-list { padding-right: 5px; }

/* Dialogs */
.dialog { position: absolute; display: flex; flex-direction: column; background: #f8f8f8; border: 1px solid #c6c6c6; border-top-color: #5b87b5; }
.d-title { height: 28px; flex: none; display: flex; align-items: flex-start; gap: 26px; padding: 0 14px 0 10px; margin: 0 -1px; background: var(--blue); color: #b6c5df; }
.d-title span { flex: 1; padding-top: 9px; font: 11px/16px var(--ui); }
.d-title button { padding-top: 6px; }
.d-title svg { stroke-width: 2px; }
.sheet { flex: none; display: flex; flex-direction: column; margin: 7px 16px 0 13px; border: 1px solid var(--line); }
.sheet-rows { display: flex; background: var(--sheet); overflow: hidden; }
.sheet-rows .prop-list { padding-top: 1px; }
.sheet-note { height: 67px; border-top: 2px solid var(--line); padding: 3px 4px 0; line-height: 17px; font-family: var(--wide); }
.sheet-note p { color: #8c8c8c; }
.d-player { --label: 444px; left: 723px; top: 405px; width: 968px; height: 621px; }
.d-player .sheet-rows { height: 454px; }
.credits { padding: 6px 13px; font: 11px/20px var(--arial); }
.d-list { left: 1317px; top: 514px; width: 538px; height: 350px; font: 11px/14px var(--arial); }
.list-body { flex: 1; display: flex; gap: 11px; padding: 10px 16px 18px 13px; }
.list-frame { flex: 1; min-width: 0; display: flex; flex-direction: column; justify-content: space-between; background: var(--sheet); border: 1px solid var(--line); border-top-width: 2px; overflow: hidden; }
table { border-collapse: collapse; table-layout: fixed; width: 419px; }
th, td { padding: 0 0 0 4px; height: 15px; font-weight: 400; text-align: left; white-space: nowrap; }
th { border-right: 1px solid var(--line); border-bottom: 1px solid var(--line); height: 16px; }
th:last-child { padding-left: 3px; border-right: 0; }
tbody tr { background: #f6f6f6; }
.c-first { width: 150px; }
td.c-first { text-align: right; padding-right: 8px; }
.c-thumb { width: 86px; } .c-poster { width: 66px; } .c-desc { width: 56px; }
.hbar { height: 18px; display: flex; align-items: center; justify-content: flex-end; padding-right: 5px; background: #f0f0f0; }
.hbar svg { fill: #666; stroke: none; }
.list-buttons { width: 76px; display: flex; flex-direction: column; gap: 6px; }
.btn { height: 22px; border: 1px solid var(--line); border-radius: 4px; background: #fdfdfd; font: 11px/14px var(--arial); }
.push { margin-top: auto; }
.grip { position: absolute; right: 8px; bottom: 7px; width: 9px; height: 9px; fill: #c8c8c8; stroke: none; }
.d-edit { --label: 277px; left: 835px; top: 551px; width: 635px; height: 485px; }
.d-edit .sheet-rows { height: 330px; }
.d-text { left: 1186px; top: 769px; width: 539px; height: 351px; border-color: #4f8fc6; box-shadow: 0 0 6px rgba(0, 70, 140, .55); }
.d-text .d-title { color: #e6edf7; }
.format { display: flex; align-items: flex-start; gap: 4px; padding: 13px 14px 0; font: 11px/14px var(--arial); height: 39px; }
.combo { display: flex; align-items: center; height: 20px; border: 1px solid var(--line); border-radius: 3px; background: #fdfdfd; padding: 0 7px 0 3px; }
.combo select { flex: 1; min-width: 0; }
.font { width: 135px; } .size { width: 48px; }
.color { width: 82px; height: 22px; justify-content: space-between; padding-left: 4px; margin-left: 2px; }
.swatch { width: 55px; height: 13px; background: #000; }
.fmt { width: 21px; height: 22px; display: grid; place-items: center; font: 15px/20px "Liberation Serif", serif; color: #333; }
.fmt i { font: italic 15px/20px "Liberation Serif", serif; }
.fmt b { color: #222; }
.omega { color: #4a84c8; font-size: 18px; font-weight: 700; }
.editor { flex: 1; display: grid; grid-template: 1fr 17px / 1fr 17px; margin: 0 16px 0 14px; border: 1px solid var(--line); border-top-width: 2px; background: #f0f0f0; color: #aaa; }
textarea { width: 100%; height: 100%; resize: none; background: #fff; }
.vbar { display: flex; flex-direction: column; align-items: center; justify-content: space-between; padding: 7px 0; }
.vbar svg, .hbar2 svg { stroke: #aaa; }
.hbar2 { display: flex; align-items: center; justify-content: space-between; padding: 0 7px; }
.actions { display: flex; justify-content: flex-end; gap: 6px; padding: 11px 17px 14px; }
.actions .btn { width: 75px; }
.actions .primary { background: var(--blue); border-color: #8ab4d8; color: #fff; }
```
